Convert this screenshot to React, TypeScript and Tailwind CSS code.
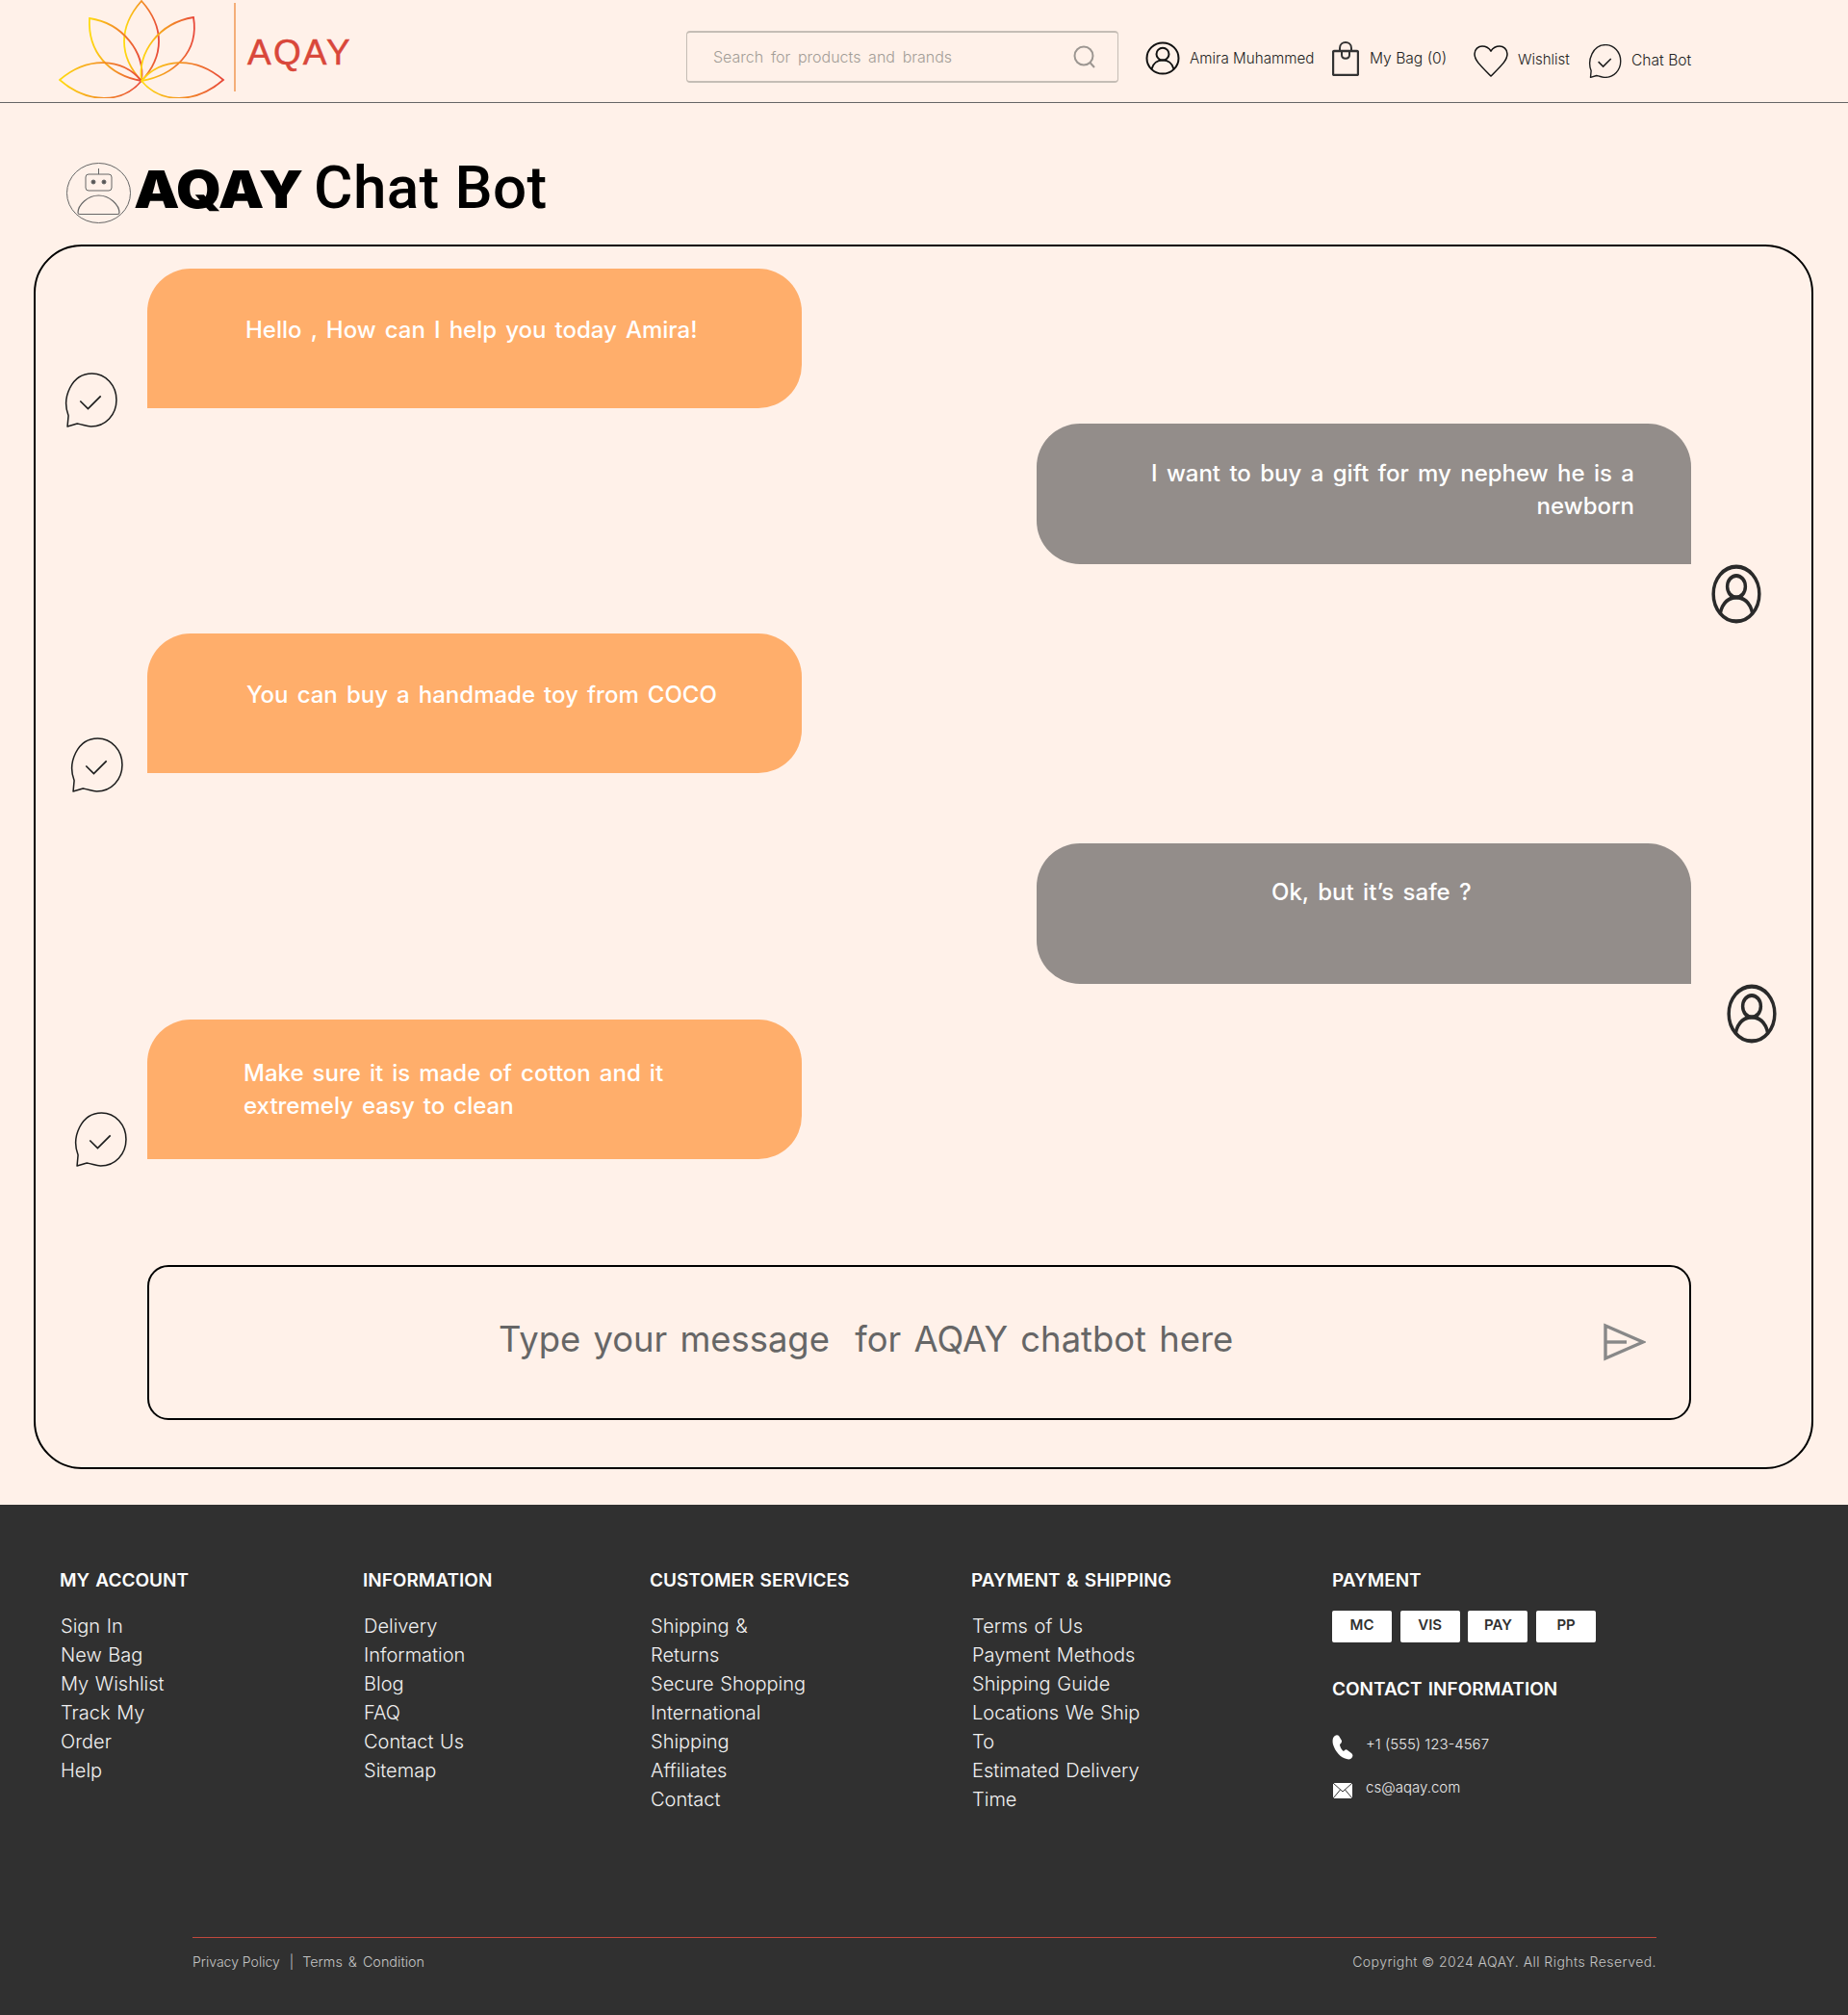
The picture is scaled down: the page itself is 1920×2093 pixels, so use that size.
function Logo() {
  const petals = [
    "M86 84 C62 58 62 28 86 1 C110 28 110 58 86 84Z",
    "M86 84 C52 78 30 54 32 19 C66 24 90 54 86 84Z",
    "M86 84 C120 78 146 54 140 18 C104 24 82 54 86 84Z",
    "M86 84 C66 60 30 58 1 83 C30 108 66 108 86 84Z",
    "M86 84 C106 108 142 108 171 83 C142 58 106 60 86 84Z",
  ];
  return (
    <svg width="174" height="102" viewBox="0 0 174 102" fill="none" className="shrink-0 ml-[1px]">
      <defs>
        <linearGradient id="lg1" x1="0" y1="0" x2="1" y2="0">
          <stop offset="0" stopColor="#ffdc10" />
          <stop offset="1" stopColor="#e8483a" />
        </linearGradient>
      </defs>
      {petals.map((d, i) => (
        <path key={i} d={d} stroke="url(#lg1)" strokeWidth="1.8" />
      ))}
    </svg>
  );
}
function UserIcon({ w, h, sw, c }: { w: number; h: number; sw: number; c: string }) {
  return (
    <svg width={w} height={h} viewBox="0 0 36 36" preserveAspectRatio="none" fill="none" stroke={c} strokeWidth={sw} className="shrink-0">
      <circle cx="18" cy="18" r="16.5" />
      <circle cx="18" cy="13.5" r="6.5" />
      <path d="M6.5 29.5 C8 23 13 20 18 20 C23 20 28 23 29.5 29.5" />
    </svg>
  );
}
function ChatIcon({ s, sw }: { s: number; sw: number }) {
  return (
    <svg width={s} height={s} viewBox="0 0 56 56" fill="none" stroke="#1d1d1d" strokeWidth={sw} className="shrink-0">
      <path d="M4 55 L5 44 C-2 26 8 1 29 1 C43 1 54 13 54 28 C54 43 43 55 28 55 C23 55 20 53 14 52 Z" strokeLinejoin="round" />
      <path d="M17 29 L25 37 L38 24" strokeWidth={sw * 1.1} />
    </svg>
  );
}
function BotRow({ text, mt, iconMl, iconMt, pl }: { text: React.ReactNode; mt: string; iconMl: string; iconMt: string; pl: string }) {
  return (
    <div className={`flex items-start ${mt}`}>
      <div className="w-[115px] shrink-0 h-[145px]">
        <div className={`${iconMl} ${iconMt}`}>
          <ChatIcon s={57} sw={1.5} />
        </div>
      </div>
      <div className={`w-[680px] h-[145px] bg-[#ffae6b] rounded-tl-[45px] rounded-tr-[45px] rounded-br-[45px] text-white text-[24px] leading-[34px] font-medium [word-spacing:2.7px] ${pl}`}>
        {text}
      </div>
    </div>
  );
}
const footerCols = [
  { w: "w-[315px]", h: "MY ACCOUNT", items: ["Sign In", "New Bag", "My Wishlist", "Track My", "Order", "Help"] },
  { w: "w-[298px]", h: "INFORMATION", items: ["Delivery", "Information", "Blog", "FAQ", "Contact Us", "Sitemap"] },
  { w: "w-[334px]", h: "CUSTOMER SERVICES", items: ["Shipping &", "Returns", "Secure Shopping", "International", "Shipping", "Affiliates", "Contact"] },
  { w: "w-[375px]", h: "PAYMENT & SHIPPING", items: ["Terms of Us", "Payment Methods", "Shipping Guide", "Locations We Ship", "To", "Estimated Delivery", "Time"] },
];
export default function App() {
  return (
    <div className="w-[1920px] h-[2093px] bg-[#fff1e9] font-['Inter',sans-serif] overflow-hidden flex flex-col">
      {/* header */}
      <header className="h-[107px] border-b border-[#666] flex items-start pl-[60px] shrink-0">
        <Logo />
        <div className="w-[2px] h-[92px] mt-[3px] ml-[8px] bg-[#f4ae78] shrink-0" />
        <div className="ml-[12px] mt-[33px] w-[108px] font-['Liberation_Sans',sans-serif] text-[37px] leading-[44px] text-[#d9473a] tracking-[2.2px] [-webkit-text-stroke:0.5px_#d9473a]">AQAY</div>
        <div className="ml-[348px] mt-[32px] w-[449px] h-[54px] border border-[#c5bdb5] rounded-[4px] flex items-center justify-between pl-[27px] pr-[22px] border-t-2 border-b-2">
          <span className="text-[16px] text-[#a39d97] font-light [word-spacing:3.2px] whitespace-nowrap">Search for products and brands</span>
          <svg width="24" height="24" viewBox="0 0 24 24" fill="none" stroke="#9c9691" strokeWidth="2">
            <circle cx="11" cy="11" r="9.5" /><path d="M17.5 18 L22 23" />
          </svg>
        </div>
        <div className="ml-[28px] mt-[43px]"><UserIcon w={36} h={35} sw={2} c="#111" /></div>
        <span className="ml-[10px] mt-[50px] w-[130px] text-[15.2px] leading-[22px] text-[#222] font-light whitespace-nowrap">Amira Muhammed</span>
        <svg className="ml-[18px] mt-[43px] shrink-0" width="28" height="36" viewBox="0 0 28 36" fill="none" stroke="#333" strokeWidth="2">
          <rect x="1" y="10" width="26" height="25" rx="1.5" strokeWidth="2.4" />
          <path d="M8 10 V7 C8 -1 20 -1 20 7 V10" />
          <path d="M10 11 V14 C10 19 18 19 18 14 V11" />
        </svg>
        <span className="ml-[11px] mt-[50px] w-[80px] text-[15.6px] leading-[22px] text-[#222] font-light whitespace-nowrap">My Bag (0)</span>
        <svg className="ml-[28px] mt-[47px] shrink-0" width="36" height="33" viewBox="0 0 36 33" fill="none" stroke="#111" strokeWidth="1.5">
          <path d="M18 32 C8 22 1 16 1 9 C1 4 5 1 9 1 C13 1 16 3 18 6 C20 3 23 1 27 1 C31 1 35 4 35 9 C35 16 28 22 18 32Z" />
        </svg>
        <span className="ml-[10px] mt-[51px] w-[53px] text-[15px] leading-[22px] text-[#222] font-light">Wishlist</span>
        <div className="ml-[20px] mt-[46px]"><ChatIcon s={35} sw={2.2} /></div>
        <span className="ml-[10px] mt-[52px] text-[15.6px] leading-[22px] text-[#222] font-light whitespace-nowrap">Chat Bot</span>
      </header>
      {/* title */}
      <div className="h-[147px] shrink-0 flex items-start pl-[69px]">
        <svg className="mt-[62px] shrink-0" width="67" height="63" viewBox="0 0 67 63" fill="none" stroke="#666" strokeWidth="1">
          <ellipse cx="33.5" cy="31.5" rx="33" ry="31" />
          <rect x="20" y="12" width="27" height="17" rx="3" />
          <path d="M33.5 12 V6" />
          <circle cx="28" cy="20" r="2" fill="#555" /><circle cx="39" cy="20" r="2" fill="#555" />
          <path d="M12 52 C12 44 22 34 33.5 34 C45 34 55 44 55 52 C55 53 54 53.5 53 53.5 H14 C13 53.5 12 53 12 52Z" strokeWidth="1.2" />
        </svg>
        <div className="mt-[48px] ml-[3px] flex items-baseline text-black whitespace-nowrap">
          <span className="inline-block w-[172px] origin-left scale-x-[1.13] font-['Inter',sans-serif] font-black text-[53px] leading-[80px] tracking-[-0.5px]">AQAY</span>
          <span className="ml-[15px] font-['Roboto',sans-serif] font-medium text-[62px] leading-[80px] tracking-[0.4px]">Chat Bot</span>
        </div>
      </div>
      {/* chat */}
      <main className="ml-[35px] w-[1849px] h-[1272px] border-2 border-black rounded-[50px] shrink-0 pl-[1px] pt-[23px]">
        <BotRow mt="" iconMl="ml-[28px]" iconMt="pt-[108px]" pl="pl-[102px] pt-[47px]" text="Hello , How can I help you today Amira!" />
        <div className="flex items-start ml-[1039px] mt-[16px]">
          <div className="w-[680px] h-[146px] bg-[#938d8a] rounded-tl-[45px] rounded-tr-[45px] rounded-bl-[45px] text-white text-[24px] leading-[34px] font-medium text-right pt-[35px] pr-[59px] pl-[80px] [word-spacing:3px]">
            I want to buy a gift for my nephew he is a newborn
          </div>
          <div className="ml-[21px] mt-[146px] h-0"><UserIcon w={52} h={62} sw={2.4} c="#2a2a2a" /></div>
        </div>
        <BotRow mt="mt-[72px]" iconMl="ml-[34px]" iconMt="pt-[108px]" pl="pl-[103px] pt-[47px]" text="You can buy a handmade toy from COCO" />
        <div className="flex items-start ml-[1039px] mt-[73px]">
          <div className="w-[680px] h-[146px] bg-[#938d8a] rounded-tl-[45px] rounded-tr-[45px] rounded-bl-[45px] text-white text-[24px] leading-[34px] font-medium pt-[34px] pl-[244px] [word-spacing:3px]">
            Ok, but it’s safe ?
          </div>
          <div className="ml-[37px] mt-[146px] h-0"><UserIcon w={52} h={62} sw={2.4} c="#2a2a2a" /></div>
        </div>
        <BotRow mt="mt-[37px]" iconMl="ml-[38px]" iconMt="pt-[96px]" pl="pl-[100px] pr-[120px] pt-[39px]" text="Make sure it is made of cotton and it extremely easy to clean" />
        <div className="ml-[115px] mt-[110px] w-[1604px] h-[161px] border-2 border-black rounded-[22px] flex items-center pl-[363px] pr-[45px] justify-between">
          <span className="text-[36.4px] -mt-[7px] text-[#666] whitespace-pre [word-spacing:3px]">Type your message  for AQAY chatbot here</span>
          <svg width="44" height="40" viewBox="0 0 44 40" fill="none" stroke="#888" strokeWidth="3.4" className="-mt-[2px]">
            <path d="M2 3 L41 20 L2 37 Z" /><path d="M2 20 H24" />
          </svg>
        </div>
      </main>
      {/* footer */}
      <footer className="mt-[37px] flex-1 bg-[#303030] text-white pl-[62px] pt-[67px]">
        <div className="flex h-[382px] items-start">
          {footerCols.map((c) => (
            <div key={c.h} className={`${c.w} shrink-0`}>
              <h3 className="text-[19px] leading-[24px] font-semibold text-white whitespace-nowrap [word-spacing:1.5px]">{c.h}</h3>
              <ul className="mt-[20px] pl-[1px]">
                {c.items.map((it, i) => (
                  <li key={i} className="text-[20px] leading-[30px] font-light text-[#f0f0f0] whitespace-nowrap [word-spacing:1px]">{it}</li>
                ))}
              </ul>
            </div>
          ))}
          <div className="shrink-0">
            <h3 className="text-[19px] leading-[24px] font-semibold">PAYMENT</h3>
            <div className="flex gap-[8.7px] mt-[19px]">
              {["MC", "VIS", "PAY", "PP"].map((p) => (
                <div key={p} className="w-[62px] h-[33px] bg-white rounded-[2px] text-[#303030] text-[15px] leading-[29px] font-semibold text-center">{p}</div>
              ))}
            </div>
            <h3 className="mt-[37px] text-[19px] leading-[24px] font-semibold whitespace-nowrap [word-spacing:1.5px]">CONTACT INFORMATION</h3>
            <div className="mt-[35px] flex items-start">
              <svg width="22" height="26" viewBox="0 0 22 26" fill="#fff" className="shrink-0">
                <path d="M3 1 C1 2 0 5 1 10 C3 17 9 24 15 25 C18 26 20 25 21 23 C22 21 21 20 20 19 L16 16 C15 15 14 15 13 16 L12 17 C10 16 8 12 8 10 L9 9 C10 8 10 7 10 6 L7 1 C6 0 4 0 3 1Z" />
              </svg>
              <span className="ml-[13px] text-[15px] leading-[20px] font-light text-[#e8e8e8]">+1 (555) 123-4567</span>
            </div>
            <div className="mt-[19px] flex items-start">
              <svg width="20" height="16" viewBox="0 0 20 16" className="ml-[1px] mt-[5px] shrink-0" fill="#fff" stroke="#303030" strokeWidth="1">
                <rect x="0" y="0" width="20" height="16" stroke="none" />
                <path d="M0 0 L10 9 L20 0 M0 16 L7.5 7 M20 16 L12.5 7" fill="none" />
              </svg>
              <span className="ml-[14px] text-[15px] leading-[20px] font-light text-[#e8e8e8]">cs@aqay.com</span>
            </div>
          </div>
        </div>
        <div className="ml-[138px] w-[1521px] border-t border-[#c0483c] pt-[15px] flex justify-between text-[14px] leading-[20px] font-light text-[#c4c4c4]">
          <span className="flex">
            <span>Privacy Policy</span>
            <span className="ml-[10px]">|</span>
            <span className="ml-[9px] [word-spacing:2px] text-[14.4px]">Terms &amp; Condition</span>
          </span>
          <span className="tracking-[0.45px]">Copyright © 2024 AQAY. All Rights Reserved.</span>
        </div>
      </footer>
    </div>
  );
}
